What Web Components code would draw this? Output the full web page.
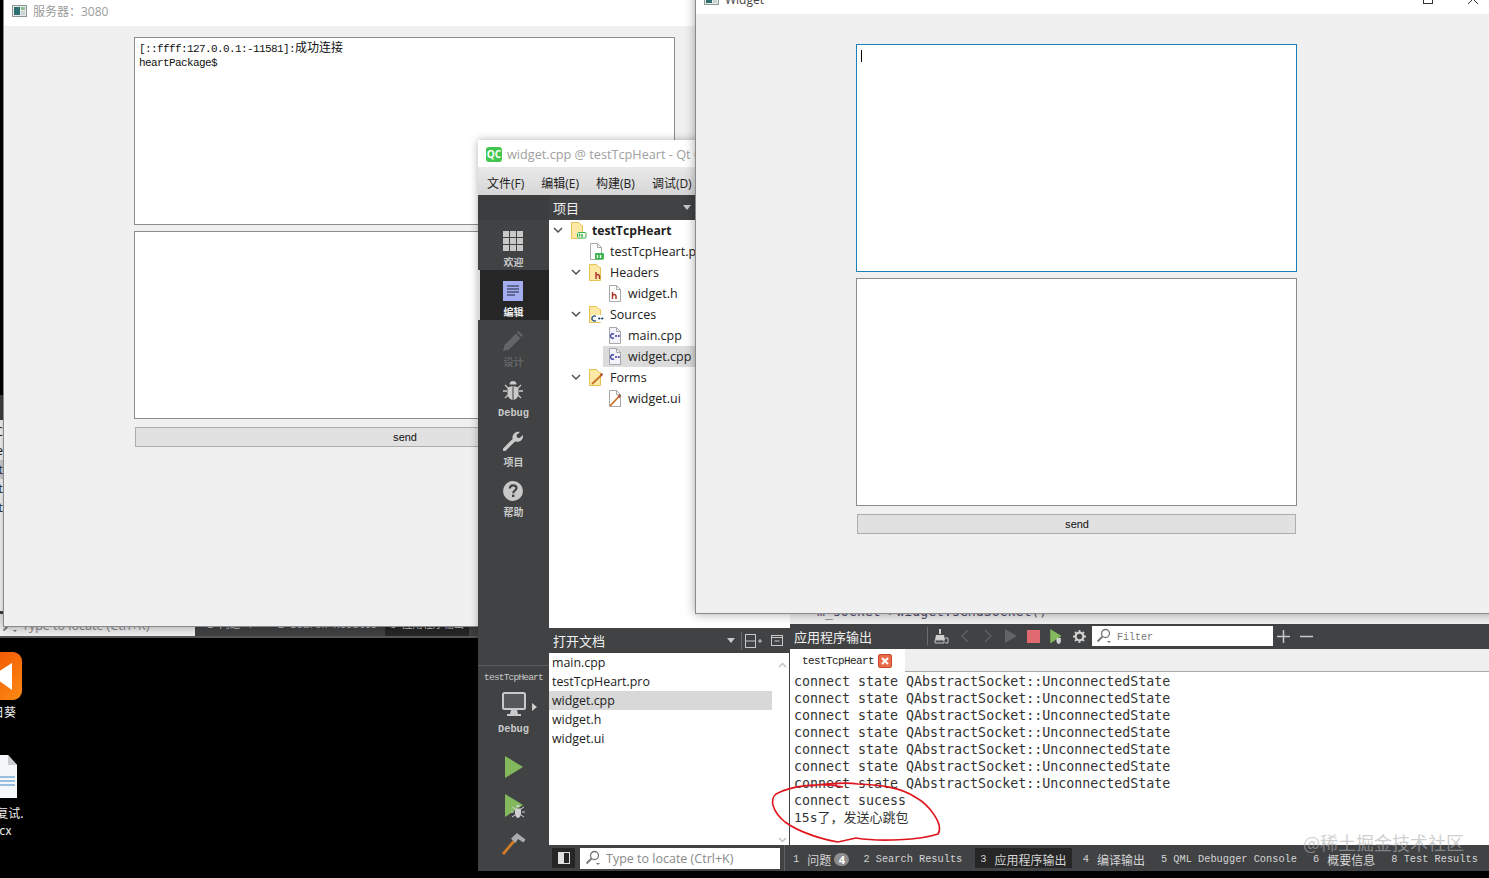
<!DOCTYPE html>
<html lang="zh">
<head>
<meta charset="utf-8">
<title>testTcpHeart</title>
<style>
  html, body { margin: 0; padding: 0; height: 100%; background: #000; overflow: hidden; }
  old-creator { left: 0; top: 395px; width: 478px; height: 243px; }
  #server { left: 3px; top: -4px; width: 820px; height: 631px; --title-h: 30px; --pad-left: 130px; --pad-top: 11px; --box-w: 541px; --box-h: 188px; }
  #client { left: 695px; top: -16px; width: 800px; height: 630px; --title-h: 30px; --pad-left: 160px; --pad-top: 30px; --box-w: 441px; --box-h: 228px; }
  creator-window { left: 478px; top: 140px; width: 1011px; height: 731px; }
</style>
</head>
<body>
<app-desktop>
  <desktop-shortcut style="left:-42px;top:652px" kind="sunflower">向日葵</desktop-shortcut>
  <desktop-shortcut style="left:-42px;top:755px" kind="doc">面试复试.<br>docx</desktop-shortcut>
  <old-creator></old-creator>
  <chat-window id="server" label="服务器：3080">[::ffff:127.0.0.1:-11581]:<span style="font-family:'Noto Sans CJK SC',sans-serif;letter-spacing:0;font-size:12px">成功连接</span>
heartPackage$</chat-window>
  <creator-window></creator-window>
  <chat-window id="client" label="Widget" focused caption></chat-window>
</app-desktop>

<script>
const icons = {
  grid: `<svg width="20" height="20" viewBox="0 0 20 20" fill="#c9c9c9"><path d="M0 0h6v6H0zM7 0h6v6H7zM14 0h6v6h-6zM0 7h6v6H0zM7 7h6v6H7zM14 7h6v6h-6zM0 14h6v6H0zM7 14h6v6H7zM14 14h6v6h-6z"/></svg>`,
  edit: `<svg width="20" height="20" viewBox="0 0 20 20"><rect width="20" height="20" fill="#a3adf0"/><path d="M4 5h12M4 8h12M4 11h12M4 14h8" stroke="#20243c" stroke-width="1.2"/></svg>`,
  pencil: `<svg width="20" height="20" viewBox="0 0 20 20" fill="#626466"><path d="M0 20l1.5-6L13 2.5l4.500 4.500L6 18.500z"/><path d="M14 1.500L15.500 0 20 4.500 18.500 6z"/></svg>`,
  bug: `<svg width="20" height="20" viewBox="0 0 20 20"><path d="M2 4l3 3M18 4l-3 3M0 10h4M20 10h-4M2 17l3-3M18 17l-3-3" stroke="#c9c9c9" stroke-width="1.300"/><path d="M6.500 3.500a3.500 3.500 0 0 1 7 0z" fill="#c9c9c9"/><path d="M9.500 5L4.500 6.500V13c0 3 2.500 5.500 5 6zM10.500 5l5 1.500V13c0 3-2.500 5.500-5 6z" fill="#c9c9c9"/></svg>`,
  wrench: `<svg width="20" height="20" viewBox="0 0 20 20"><path d="M1.500 18.500L11 9" stroke="#c9c9c9" stroke-width="3.400" stroke-linecap="round"/><path d="M9.500 7.500C9 3.500 12.500 0 17 1l-3.500 3 .5 2.500 2.500.5L20 4c.8 4.500-3 8-7.500 6.500z" fill="#c9c9c9"/></svg>`,
  help: `<svg width="20" height="20" viewBox="0 0 20 20"><circle cx="10" cy="10" r="10" fill="#c9c9c9"/><path d="M6.800 7.500C7 5 8.500 4.300 10.200 4.300c2 0 3.300 1.200 3.300 2.800 0 2.600-3.300 2.600-3.300 5.100" fill="none" stroke="#404244" stroke-width="2.200"/><rect x="9" y="13.600" width="2.400" height="2.400" fill="#404244"/></svg>`,
  monitor: `<svg width="24" height="24" viewBox="0 0 24 24"><rect x="1" y="1" width="22" height="16" rx="1.500" fill="#55585a" stroke="#c9c9c9" stroke-width="2"/><path d="M9 18h6l1 4H8z" fill="#c9c9c9"/><path d="M5 22h14v2H5z" fill="#c9c9c9"/></svg>`,
  play: `<svg width="18" height="22" viewBox="0 0 18 22"><path d="M0 0l18 11L0 22z" fill="#83b85c"/></svg>`,
  playDebug: `<svg width="20" height="24" viewBox="0 0 20 24"><path d="M0 0l18 11L0 23z" fill="#83b85c"/><path d="M7 13l3 2M19 13l-3 2M6 18h3M20 18h-3M7 23l3-2M19 23l-3-2" stroke="#d0d0d0"/><path d="M10 14.500h6V20c0 2-1.500 3.500-3 4-1.500-.5-3-2-3-4zM11 13a2 2 0 0 1 4 0z" fill="#d0d0d0"/></svg>`,
  hammer: `<svg width="24" height="22" viewBox="0 0 24 22"><path d="M1 21L13 7" stroke="#cf7d2b" stroke-width="2.800"/><path d="M9 5.500L15 0l8.500 6.500-2 3L16 6l-2.500 4z" fill="#a9abad"/></svg>`,
  folderQt: `<svg width="16" height="17" viewBox="0 0 16 17"><path d="M.5.500h7l3 3v0h1v13H.5z" fill="#fde9a6" stroke="#e7c252"/><rect x="6" y="10" width="9.500" height="6.500" fill="#fff"/><rect x="6.500" y="10.500" width="8.500" height="5.500" rx="1" fill="#fff" stroke="#38b048"/><path d="M8.500 11.500v3M11 12v3" stroke="#38b048" stroke-width="1.500"/></svg>`,
  filePro: `<svg width="16" height="17" viewBox="0 0 16 17"><path d="M1.500.500h7l4 4v12h-11z" fill="#fff" stroke="#a8a8a8"/><path d="M8.500.500v4h4" fill="none" stroke="#a8a8a8"/><rect x="6" y="10" width="9" height="6.500" rx="1" fill="#3fb550"/><path d="M8.500 12v3M11.500 12v3" stroke="#fff" stroke-width="1.300"/></svg>`,
  folderH: `<svg width="16" height="17" viewBox="0 0 16 17"><path d="M.5.500h7l3 3h1v13H.5z" fill="#fde9a6" stroke="#e7c252"/><path d="M7 8v7M7 11.500c2-1.500 3.500-1 3.500 1V15" fill="none" stroke="#b03c32" stroke-width="1.500"/></svg>`,
  fileH: `<svg width="16" height="17" viewBox="0 0 16 17"><path d="M2.500.500h7l4 4v12h-11z" fill="#fff" stroke="#a8a8a8"/><path d="M9.500.500v4h4" fill="none" stroke="#a8a8a8"/><path d="M5.500 7v7M5.500 10.500c2-1.500 3.500-1 3.500 1V14" fill="none" stroke="#a83a32" stroke-width="1.500"/></svg>`,
  folderCpp: `<svg width="16" height="17" viewBox="0 0 16 17"><path d="M.5.500h7l3 3h1v13H.5z" fill="#fde9a6" stroke="#e7c252"/><rect x="3" y="9" width="12" height="7" fill="#fff"/><path d="M7 10.500a2.500 2.500 0 1 0 0 4" fill="none" stroke="#27507c" stroke-width="1.300"/><path d="M9 12.500h2.400M10.200 11.300v2.400M12 12.500h2.400M13.200 11.300v2.400" stroke="#27507c"/></svg>`,
  fileCpp: `<svg width="16" height="17" viewBox="0 0 16 17"><path d="M2.500.500h7l4 4v12h-11z" fill="#f3f3fb" stroke="#a8a8a8"/><path d="M9.500.500v4h4" fill="none" stroke="#a8a8a8"/><path d="M7 7.200a2.200 2.200 0 1 0 0 3.600" fill="none" stroke="#3a3aa0" stroke-width="1.300"/><path d="M8 9h2M9 8v2M10.800 9h2M11.800 8v2" stroke="#3a3aa0"/></svg>`,
  folderUi: `<svg width="16" height="17" viewBox="0 0 16 17"><path d="M.5.500h7l3 3h1v13H.5z" fill="#fde9a6" stroke="#e7c252"/><path d="M3 15L12 6.500" stroke="#c77428" stroke-width="1.800"/><path d="M10.800 5.500L13 4l1 1.500-1.500 2z" fill="#a34a2c"/></svg>`,
  fileUi: `<svg width="16" height="17" viewBox="0 0 16 17"><path d="M2.500.500h7l4 4v12h-11z" fill="#fff" stroke="#a8a8a8"/><path d="M9.500.500v4h4" fill="none" stroke="#a8a8a8"/><path d="M3 16L11.500 7" stroke="#c77428" stroke-width="1.800"/><path d="M10.500 6L13 4.500l1 1.500-1.700 2z" fill="#a34a2c"/></svg>`,
  chevron: `<svg width="10" height="7" viewBox="0 0 10 7"><path d="M1 1l4 4 4-4" fill="none" stroke="#505050" stroke-width="1.500"/></svg>`,
  search: `<svg width="16" height="16" viewBox="0 0 16 16" fill="none"><circle cx="9.500" cy="5.500" r="4" stroke="#777" stroke-width="1.300"/><path d="M6.500 8.500L1.500 13.500" stroke="#777" stroke-width="1.800"/><path d="M11 13l2 2 2-2z" fill="#777"/></svg>`
}

const windowIcon = `<svg width="15" height="12" viewBox="0 0 15 12"><rect x=".5" y=".5" width="14" height="11" fill="#e8ece8" stroke="#8b9696"/><rect x="2" y="2" width="6" height="8" fill="#2f6f72"/><rect x="9" y="2" width="4" height="3" fill="#8fbf90"/><rect x="9" y="6" width="4" height="4" fill="#c9d3d3"/></svg>`

/**
 * Build a custom element from a template string, attached in an open shadow root.
 *
 * @param {string} name - The tag name.
 * @param {string} html - The markup with its style.
 * @param {Function} [setup] - Called with the element once the shadow root is filled.
 */
function defineElement (name, html, setup) {
  const template = document.createElement('template')
  template.innerHTML = html

  customElements.define(name, class extends HTMLElement {
    constructor () {
      super()
      this.attachShadow({ mode: 'open' })
        .appendChild(template.content.cloneNode(true))
    }

    connectedCallback () {
      if (setup) setup(this, this.shadowRoot)
    }
  })
}

defineElement('app-desktop', `
  <style>
    :host { display: block; position: relative; width: 1489px; height: 878px; overflow: hidden; background: #000; }
  </style>
  <slot></slot>
`)

defineElement('desktop-shortcut', `
  <style>
    :host { position: absolute; display: flex; flex-direction: column; align-items: center; width: 80px; color: #eee; font: 12px/17px "Noto Sans CJK SC", sans-serif; text-align: center; }
  </style>
  <div id="holder"></div>
  <div><slot></slot></div>
`, (el, root) => {
  const kind = el.getAttribute('kind')
  root.querySelector('#holder').innerHTML = kind === 'doc'
    ? `<svg width="34" height="43" viewBox="0 0 34 43" style="display:block;margin-left:3px;margin-bottom:6px"><path d="M0 0h25l9 10v33H0z" fill="#f5f7fb"/><path d="M25 0v10h9z" fill="#c9ccd2"/><path d="M2 22h30M2 26h30M2 30h30" stroke="#3f86c4"/></svg>`
    : `<svg width="48" height="48" viewBox="0 0 48 48" style="display:block;margin-bottom:3px"><defs><linearGradient id="g" x1="0" y1="0" x2="1" y2="1"><stop offset="0" stop-color="#f04a00"/><stop offset="1" stop-color="#fb8a14"/></linearGradient></defs><rect width="48" height="48" rx="9" fill="url(#g)"/><path d="M38 11v27L18 24z" fill="#fff"/><path d="M10 14l16 10-16 10z" fill="#ffd9c2"/></svg>`
})

defineElement('old-creator', `
  <style>
    :host { position: absolute; display: flex; flex-direction: column; background: #fff; font: 13px "Open Sans", "Noto Sans CJK SC", sans-serif; color: #222; }
    #head { height: 25px; background: #404244; flex: none; }
    #rows { flex: 1; overflow: hidden; }
    #rows div { height: 19px; line-height: 19px; width: 3px; overflow: hidden; direction: rtl; }
    #rows .sel { background: #d8d8d8; }
    #tick { height: 3px; background: #404244; }
    #status { display: flex; align-items: center; height: 22px; background: #404244; border-bottom: 2px solid #555; color: #ccc; flex: none; }
    #locate { display: flex; align-items: center; gap: 4px; width: 195px; height: 22px; box-sizing: border-box; background: #efefef; color: #888; padding-left: 2px; font-size: 12.500px; flex: none; }
    span.tab { font: 10.300px "Liberation Mono", "Noto Sans CJK SC", monospace; padding: 0 5px; line-height: 22px; white-space: pre; flex: none; }
    span.on { background: #262626; }
  </style>
  <div id="head"></div>
  <div id="rows">
    <div style="height:2px"></div>
    <div>C</div><div>e</div><div class="sel">t</div><div>t</div><div>t</div>
  </div>
  <div id="tick"></div>
  <div id="status">
    <div id="locate">${icons.search}<span>Type to locate (Ctrl+K)</span></div>
    <span class="tab" style="margin-left:7px;width:56px">1 问题 4</span>
    <span class="tab" style="margin-left:5px">2 Search Results</span>
    <span class="tab on" style="margin-left:3px">3 应用程序输出</span>
  </div>
`)

defineElement('chat-window', `
  <style>
    :host { position: absolute; display: flex; flex-direction: column; box-sizing: border-box; background: #f0f0f0; border-left: 1px solid #8a8a8a; border-bottom: 1px solid #8a8a8a; box-shadow: 0 0 10px rgba(0, 0, 0, .35); }
    #title { display: flex; align-items: center; flex: none; height: var(--title-h); background: #fff; padding-left: 8px; gap: 6px; color: #9b9b9b; font: 12px "Open Sans", "Noto Sans CJK SC", sans-serif; position: relative; }
    #caption { display: none; margin-left: auto; align-items: center; gap: 35px; margin-right: 17px; }
    :host([caption]) #caption { display: flex; }
    :host([caption]) #title { color: #444; }
    #form { display: flex; flex-direction: column; align-items: flex-start; gap: 6px; padding: var(--pad-top) 0 0 var(--pad-left); flex: 1; }
    .box { width: var(--box-w); height: var(--box-h); box-sizing: border-box; background: #fff; border: 1px solid #8c8c8c; padding: 2px 4px; font: 11px/14px "Liberation Mono", "Noto Sans CJK SC", monospace; letter-spacing: -.6px; white-space: pre-wrap; color: #111; position: relative; overflow: hidden; }
    :host([focused]) #log { border-color: #1b7fb8; }
    #caret { display: none; position: absolute; left: 4px; top: 5px; width: 1px; height: 12px; background: #000; }
    :host([focused]) #caret { display: block; }
    button { margin: 2px 0 0 1px; width: calc(var(--box-w) - 2px); height: 20px; padding: 1px 0 0; background: #e1e1e1; border: 1px solid #adadad; color: #111; font: 11px "Liberation Mono", monospace; letter-spacing: -.6px; }
  </style>
  <div id="title">
    <span id="icon"></span>
    <span id="label"></span>
    <div id="caption">
      <svg width="10" height="10" viewBox="0 0 10 10"><rect x=".5" y=".5" width="9" height="9" fill="none" stroke="#333"/></svg>
      <svg width="10" height="10" viewBox="0 0 10 10"><path d="M0 0l10 10M10 0L0 10" stroke="#333"/></svg>
    </div>
  </div>
  <div id="form">
    <div class="box" id="log"><span id="caret"></span><slot></slot></div>
    <div class="box"></div>
    <button>send</button>
  </div>
`, (el, root) => {
  root.querySelector('#icon').innerHTML = windowIcon
  root.querySelector('#icon').style.display = 'flex'
  root.querySelector('#label').textContent = el.getAttribute('label')
})

defineElement('mode-item', `
  <style>
    :host { display: flex; flex-direction: column; align-items: center; box-sizing: border-box; height: 50px; padding-top: 11px; gap: 5px; color: #c9c9c9; font: bold 10px/12px "Noto Sans CJK SC", sans-serif; }
    :host([active]) { background: #262626; border-left: 2px solid #d8d8d8; padding-right: 2px; color: #eee; }
    :host([dim]) { color: #626466; }
    #icon { height: 20px; margin-left: -1px; }
  </style>
  <div id="icon"></div>
  <div><slot></slot></div>
`, (el, root) => {
  root.querySelector('#icon').innerHTML = icons[el.getAttribute('icon')]
})

defineElement('mode-bar', `
  <style>
    :host { display: flex; flex-direction: column; flex: none; width: 71px; background: #404244; }
    #top { height: 25px; background: #3b3d3f; flex: none; }
    #spacer { flex: 1; }
    #kit { display: flex; flex-direction: column; align-items: center; flex: none; height: 206px; border-top: 1px solid #5a5c5e; color: #c9c9c9; font: 10.300px/12px "Liberation Mono", monospace; padding-top: 6px; box-sizing: border-box; }
    #name { font-size: 9.500px; letter-spacing: -.8px; }
    #target { position: relative; margin-top: 8px; height: 24px; }
    #target::after { content: ""; position: absolute; left: 30px; top: 11px; border-left: 5px solid #ccc; border-top: 4px solid transparent; border-bottom: 4px solid transparent; }
    #kit b { margin-top: 7px; }
    .act { display: flex; }
  </style>
  <div id="top"></div>
  <mode-item icon="grid">欢迎</mode-item>
  <mode-item icon="edit" active>编辑</mode-item>
  <mode-item icon="pencil" dim>设计</mode-item>
  <mode-item icon="bug"><span style="font-family:'Liberation Mono',monospace;font-size:10.300px">Debug</span></mode-item>
  <mode-item icon="wrench">项目</mode-item>
  <mode-item icon="help">帮助</mode-item>
  <div id="spacer"></div>
  <div id="kit">
    <div id="name">testTcpHeart</div>
    <div id="target">${icons.monitor}</div>
    <b>Debug</b>
    <div class="act" style="margin-top:21px">${icons.play}</div>
    <div class="act" style="margin-top:16px;margin-left:2px">${icons.playDebug}</div>
    <div class="act" style="margin-top:15px">${icons.hammer}</div>
  </div>
`)

defineElement('pane-header', `
  <style>
    :host { display: flex; align-items: center; flex: none; height: 25px; background: #404244; color: #f0f0f0; font: 13px "Noto Sans CJK SC", sans-serif; padding-left: 4px; box-sizing: border-box; }
    #tools { display: flex; align-items: center; margin-left: auto; height: 100%; }
  </style>
  <span><slot></slot></span>
  <div id="tools"><slot name="tools"></slot></div>
`)

defineElement('tree-row', `
  <style>
    :host { display: flex; align-items: stretch; height: 21px; font: 12.500px/21px "Open Sans", sans-serif; color: #222; padding-left: calc(var(--level, 0) * 18px); white-space: nowrap; }
    #arrow { flex: none; width: 18px; display: flex; align-items: center; justify-content: center; }
    #body { display: flex; align-items: center; flex: 1; gap: 5px; padding-left: 4px; }
    :host([selected]) #body { background: #dcdcdc; }
    :host([bold]) { font-weight: 700; font-size: 12.200px; }
    #icon { display: flex; width: 16px; height: 17px; flex: none; }
  </style>
  <div id="arrow"></div>
  <div id="body"><span id="icon"></span><span><slot></slot></span></div>
`, (el, root) => {
  el.style.setProperty('--level', el.getAttribute('level') || 0)
  root.querySelector('#icon').innerHTML = icons[el.getAttribute('icon')]
  if (el.hasAttribute('open')) root.querySelector('#arrow').innerHTML = icons.chevron
})

defineElement('doc-row', `
  <style>
    :host { display: block; height: 19px; font: 12.400px/19px "Open Sans", sans-serif; color: #222; padding-left: 3px; }
    :host([selected]) { background: #d8d8d8; }
  </style>
  <slot></slot>
`)

defineElement('status-tab', `
  <style>
    :host { display: flex; align-items: center; height: 27px; padding: 0 5px; color: #d4d4d4; font: 10.300px "Liberation Mono", "Noto Sans CJK SC", monospace; white-space: pre; }
    :host([active]) { background: #262626; height: 20px; }
    #text { display: inline-flex; align-items: center; position: relative; top: 1px; }
    ::slotted(i) { font: 12px "Noto Sans CJK SC", sans-serif; margin-left: 2px; }
    ::slotted(b) { display: inline-block; width: 15px; height: 13px; margin: 0 -2px 0 3px; border-radius: 7px; background: #8e8e8e; color: #fff; text-align: center; font: bold 11px/13px "Open Sans", sans-serif; }
  </style>
  <span id="text"><slot></slot></span>
`)

defineElement('output-pane', `
  <style>
    :host { display: flex; flex-direction: column; flex: none; height: 196px; background: #fff; }
    #tabs { display: flex; flex: none; height: 23px; box-sizing: border-box; background: #efefef; border-bottom: 1px solid #a8a8a8; }
    #tab { display: flex; align-items: center; gap: 4px; width: 115px; height: 23px; box-sizing: border-box; background: #fff; padding-left: 12px; font: 11px "Liberation Mono", monospace; letter-spacing: -.6px; color: #222; }
    #out { flex: 1; padding: 1px 0 0 4px; font: 13.300px/17px "DejaVu Sans Mono", "Noto Sans CJK SC", monospace; color: #333; white-space: pre; overflow: hidden; }
    .cn { font-size: 13px; }
  </style>
  <div id="tabs">
    <div id="tab">
      <span>testTcpHeart</span>
      <svg width="14" height="14" viewBox="0 0 14 14"><rect x=".5" y=".5" width="13" height="13" rx="1.500" fill="#ea6b4a" stroke="#c9492d"/><path d="M4 4l6 6M10 4l-6 6" stroke="#fff" stroke-width="2"/></svg>
    </div>
  </div>
  <div id="out">connect state QAbstractSocket::UnconnectedState
connect state QAbstractSocket::UnconnectedState
connect state QAbstractSocket::UnconnectedState
connect state QAbstractSocket::UnconnectedState
connect state QAbstractSocket::UnconnectedState
connect state QAbstractSocket::UnconnectedState
connect state QAbstractSocket::UnconnectedState
connect sucess
<span class="cn">15s了，发送心跳包</span></div>
`)

defineElement('creator-window', `
  <style>
    :host { position: absolute; display: flex; flex-direction: column; background: #404244; box-shadow: 0 0 8px rgba(0, 0, 0, .3); }
    #title { display: flex; align-items: center; gap: 5px; flex: none; height: 27px; box-sizing: border-box; padding-top: 1px; background: #fff; padding-left: 8px; color: #a0a0a0; font: 12.700px "Open Sans", sans-serif; white-space: nowrap; }
    #logo { width: 16px; height: 15px; border-radius: 3px; background: #41c74f; color: #fff; font: bold 10px/15px "Open Sans", sans-serif; text-align: center; flex: none; }
    #menu { display: flex; gap: 17px; flex: none; height: 28px; padding-left: 9px; background: linear-gradient(#e9e9e9, #d6d6d6); color: #222; font: 12px/33px "Open Sans", "Noto Sans CJK SC", sans-serif; overflow: hidden; }
    #main { display: flex; flex: 1; min-height: 0; }
    #work { display: flex; flex-direction: column; flex: 1; min-width: 0; }
    #split { display: flex; flex: 1; min-height: 0; }
    #nav { display: flex; flex-direction: column; flex: none; width: 241px; }
    #tree { height: 408px; flex: none; background: #fff; overflow: hidden; }
    #docs { display: flex; flex: 1; background: #fff; min-height: 0; border-right: 1px solid #404244; }
    #list { flex: 1; margin-right: 3px; }
    #bar { flex: none; width: 14px; display: flex; flex-direction: column; justify-content: space-between; align-items: center; padding: 9px 0 2px; box-sizing: border-box; background: #fff; }
    #right { display: flex; flex-direction: column; flex: 1; min-width: 0; }
    #editor { display: flex; flex-direction: column; justify-content: flex-end; flex: 1; min-height: 0; background: #efefef; padding: 0 0 4px 27px; box-sizing: border-box; color: #5b4a70; font: 13.200px/17px "DejaVu Sans Mono", monospace; white-space: pre; }
    .sep { width: 1px; height: 18px; background: #6a6c6e; margin: 0 6px; }
    .tri { width: 0; height: 0; border-top: 5px solid #c8c8c8; border-left: 4px solid transparent; border-right: 4px solid transparent; }
    #filter { display: flex; align-items: center; gap: 5px; width: 181px; height: 20px; background: #fff; margin-left: 1px; padding-left: 4px; box-sizing: border-box; color: #777; font: 10px "Liberation Mono", monospace; }
    #filter span { margin-top: 2px; }
    .tool { display: flex; align-items: center; justify-content: center; width: 23px; }
    #status { display: flex; align-items: center; flex: none; height: 26px; background: #404244; }
    #toggle { display: flex; align-items: center; justify-content: center; width: 23px; height: 20px; margin-left: 3px; background: #262626; }
    #locate { display: flex; align-items: center; gap: 5px; width: 200px; height: 21px; margin: 0 4px 0 5px; background: #fff; padding-left: 5px; box-sizing: border-box; color: #8a8a8a; font: 12.500px "Open Sans", sans-serif; }
    #tabs { display: flex; align-items: center; gap: 6px; height: 100%; padding-left: 3px; border-left: 1px solid #5f6163; }
  </style>
  <div id="title"><div id="logo">QC</div><span>widget.cpp @ testTcpHeart - Qt Creator</span></div>
  <div id="menu"><span>文件(F)</span><span>编辑(E)</span><span>构建(B)</span><span>调试(D)</span><span>Qt</span></div>
  <div id="main">
    <mode-bar></mode-bar>
    <div id="work">
      <div id="split">
        <div id="nav">
          <pane-header>项目<div slot="tools" class="tri" style="position:relative;left:-99px"></div></pane-header>
          <div id="tree">
            <tree-row icon="folderQt" open bold>testTcpHeart</tree-row>
            <tree-row icon="filePro" level="1">testTcpHeart.pro</tree-row>
            <tree-row icon="folderH" level="1" open>Headers</tree-row>
            <tree-row icon="fileH" level="2">widget.h</tree-row>
            <tree-row icon="folderCpp" level="1" open>Sources</tree-row>
            <tree-row icon="fileCpp" level="2">main.cpp</tree-row>
            <tree-row icon="fileCpp" level="2" selected>widget.cpp</tree-row>
            <tree-row icon="folderUi" level="1" open>Forms</tree-row>
            <tree-row icon="fileUi" level="2">widget.ui</tree-row>
          </div>
          <pane-header>打开文档
            <div slot="tools" class="tri"></div>
            <div slot="tools" class="sep" style="margin-right:3px"></div>
            <svg slot="tools" width="17" height="14" viewBox="0 0 17 14" fill="none" stroke="#c8c8c8"><rect x=".5" y=".5" width="10" height="13"/><path d="M.5 7h10M13 7h4M15 5v4"/></svg>
            <svg slot="tools" width="12" height="11" viewBox="0 0 12 11" fill="none" stroke="#c8c8c8" style="margin:0 7px 0 9px"><rect x=".5" y=".5" width="11" height="10"/><path d="M.5 2.500h11M3.500 6h5" /></svg>
          </pane-header>
          <div id="docs">
            <div id="list">
              <doc-row>main.cpp</doc-row>
              <doc-row>testTcpHeart.pro</doc-row>
              <doc-row selected>widget.cpp</doc-row>
              <doc-row>widget.h</doc-row>
              <doc-row>widget.ui</doc-row>
            </div>
            <div id="bar">
              <svg width="9" height="6" viewBox="0 0 9 6"><path d="M1 5l3.500-3.500L8 5" fill="none" stroke="#c4c4c4" stroke-width="1.500"/></svg>
              <svg width="9" height="6" viewBox="0 0 9 6"><path d="M1 1l3.500 3.500L8 1" fill="none" stroke="#c4c4c4" stroke-width="1.500"/></svg>
            </div>
          </div>
        </div>
        <div id="right">
          <div id="editor">m_socket->widget.sendSocket()</div>
          <pane-header style="padding-bottom:1px">应用程序输出
            <div slot="tools" class="sep"></div>
            <svg slot="tools" width="15" height="15" viewBox="0 0 15 15" style="margin-right:4px"><path d="M5 0h2v5H5zM2 6h8l1 5H1z" fill="#d0d0d0"/><path d="M1 11h9v3H1zM11 9h3v5h-3" fill="none" stroke="#c0c0c0"/></svg>
            <span slot="tools" class="tool"><svg width="8" height="14" viewBox="0 0 8 14"><path d="M7 1L1 7l6 6" fill="none" stroke="#5c5e60" stroke-width="1.500"/></svg></span>
            <span slot="tools" class="tool"><svg width="8" height="14" viewBox="0 0 8 14"><path d="M1 1l6 6-6 6" fill="none" stroke="#5c5e60" stroke-width="1.500"/></svg></span>
            <span slot="tools" class="tool"><svg width="12" height="14" viewBox="0 0 12 14"><path d="M0 0l12 7-12 7z" fill="#626466"/></svg></span>
            <span slot="tools" class="tool"><svg width="13" height="13" viewBox="0 0 13 13"><rect width="13" height="13" fill="#e06a70"/></svg></span>
            <span slot="tools" class="tool"><svg width="13" height="15" viewBox="0 0 20 24"><path d="M0 0l18 11L0 23z" fill="#83b85c"/><path d="M10 14.500h7V20c0 2-2 3.500-3.500 4-1.500-.5-3.500-2-3.500-4z" fill="#d0d0d0"/></svg></span>
            <span slot="tools" class="tool"><svg width="13" height="13" viewBox="0 0 13 13"><circle cx="6.500" cy="6.500" r="3.800" fill="none" stroke="#d0d0d0" stroke-width="2.200"/><path d="M6.500 0v2.500M6.500 10.500V13M0 6.500h2.500M10.500 6.500H13M2 2l1.800 1.800M9.200 9.200L11 11M11 2L9.200 3.800M3.800 9.200L2 11" stroke="#d0d0d0" stroke-width="1.800"/></svg></span>
            <div slot="tools" id="filter">${icons.search}<span>Filter</span></div>
            <span slot="tools" class="tool" style="margin-left:-1px"><svg width="13" height="13" viewBox="0 0 13 13"><path d="M6.500 0v13M0 6.500h13" stroke="#c8c8c8" stroke-width="1.500"/></svg></span>
            <span slot="tools" class="tool" style="margin-right:171px"><svg width="13" height="13" viewBox="0 0 13 13"><path d="M0 6.500h13" stroke="#c8c8c8" stroke-width="1.500"/></svg></span>
          </pane-header>
          <output-pane></output-pane>
        </div>
      </div>
      <div id="status">
        <div id="toggle"><svg width="12" height="12" viewBox="0 0 12 12"><rect x=".5" y=".5" width="11" height="11" fill="none" stroke="#e0e0e0"/><rect x="1" y="1" width="5" height="10" fill="#e0e0e0"/></svg></div>
        <div id="locate">${icons.search}<span>Type to locate (Ctrl+K)</span></div>
        <div id="tabs">
          <status-tab>1 <i>问题</i><b>4</b></status-tab>
          <status-tab style="margin-right:2px">2 Search Results</status-tab>
          <status-tab active>3 <i>应用程序输出</i></status-tab>
          <status-tab>4 <i>编译输出</i></status-tab>
          <status-tab>5 QML Debugger Console</status-tab>
          <status-tab>6 <i>概要信息</i></status-tab>
          <status-tab>8 Test Results</status-tab>
        </div>
      </div>
    </div>
  </div>
  <svg width="200" height="80" viewBox="760 775 200 80" style="position:absolute;left:282px;top:635px" fill="none"><path d="M843 787C820 782 790 786 776 794C769 800 773 812 785 822C800 833 825 840 838 842L856 838C880 842 920 840 938 834C944 825 930 805 915 797C900 787 880 785 858 784C845 782 825 784 810 786" stroke="#e0141c" stroke-width="1.600"/></svg>
  <div style="position:absolute;left:825px;top:693px;color:rgba(175,175,175,.6);font:18px/18px 'Noto Sans CJK SC',sans-serif;white-space:nowrap">@稀土掘金技术社区</div>
`)
</script>
</body>
</html>
